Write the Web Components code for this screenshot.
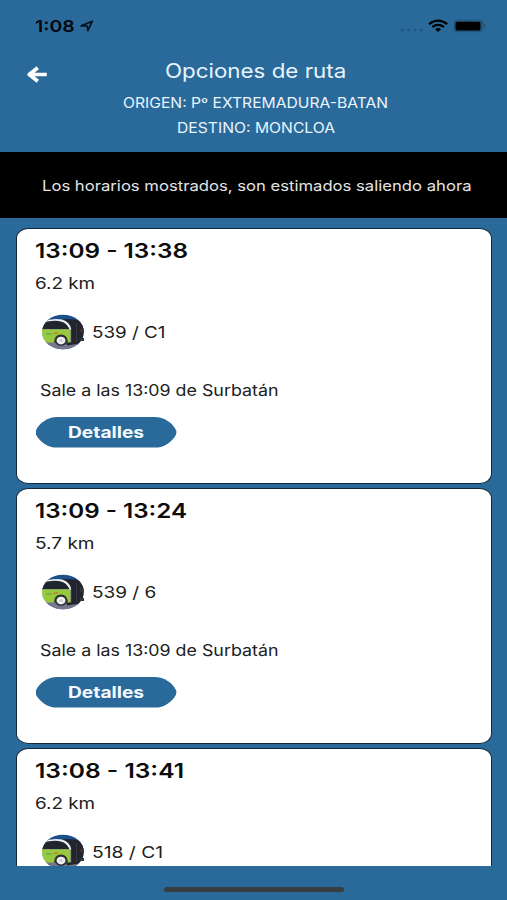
<!DOCTYPE html>
<html lang="es">
<head>
<meta charset="utf-8">
<title>Opciones de ruta</title>
<style>
  body {
    margin: 0;
    background: #2a6a9b;
    font-family: Inter, "Liberation Sans", sans-serif;
  }
</style>
</head>
<body>

<route-screen>
  <status-bar slot="status" time="1:08"></status-bar>
  <route-header slot="header"></route-header>
  <notice-banner slot="notice"><fit-text width="429.5">Los horarios mostrados, son estimados saliendo ahora</fit-text></notice-banner>
  <route-card hours="13:09 - 13:38" hours-width="153" km="6.2 km" km-width="60" lines="539 / C1" lines-width="74" leaves="Sale a las 13:09 de Surbatán"></route-card>
  <route-card hours="13:09 - 13:24" hours-width="152" km="5.7 km" km-width="59.5" lines="539 / 6" lines-width="64" leaves="Sale a las 13:09 de Surbatán"></route-card>
  <route-card hours="13:08 - 13:41" hours-width="149.5" km="6.2 km" km-width="60" lines="518 / C1" lines-width="71"></route-card>
</route-screen>

<script>
// text stretched sideways to a given width
class FitText extends HTMLElement {
  constructor() {
    super();
    this.attachShadow({ mode: 'open' }).innerHTML = `
      <style>
        :host { display: inline-block; white-space: nowrap; text-align: left; }
        span { display: inline-block; transform-origin: 0 50%; }
      </style>
      <span><slot></slot></span>
    `;
  }

  connectedCallback() {
    const span = this.shadowRoot.querySelector('span');
    const width = Number(this.getAttribute('width'));
    const natural = span.offsetWidth;
    this.style.width = `${width}px`;
    if (natural) span.style.transform = `scaleX(${width / natural})`;
  }
}

class RouteScreen extends HTMLElement {
  constructor() {
    super();
    this.attachShadow({ mode: 'open' }).innerHTML = `
      <style>
        :host {
          display: flex;
          flex-direction: column;
          box-sizing: border-box;
          width: 507px;
          height: 900px;
          overflow: hidden;
          background: #2a6a9b;
        }
        .list {
          flex: 1;
          min-height: 0;
          overflow: hidden;
          display: flex;
          flex-direction: column;
          gap: 4px;
          padding: 10.5px 15.5px 0 16px;
        }
        .home {
          flex: none;
          height: 34px;
          display: flex;
          justify-content: center;
          align-items: flex-end;
        }
        .home i {
          width: 180px;
          height: 5px;
          margin-bottom: 8px;
          border-radius: 3px;
          background: #3a3d3f;
        }
      </style>
      <slot name="status"></slot>
      <slot name="header"></slot>
      <slot name="notice"></slot>
      <div class="list"><slot></slot></div>
      <div class="home"><i></i></div>
    `;
  }
}

class StatusBar extends HTMLElement {
  constructor() {
    super();
    this.attachShadow({ mode: 'open' }).innerHTML = `
      <style>
        :host {
          display: flex;
          flex: none;
          align-items: center;
          box-sizing: border-box;
          height: 52px;
          padding: 0 20px 0 35px;
          color: #04080c;
          font-size: 16.5px;
          font-weight: 600;
        }
        svg { display: block; }
        .arrow { margin-left: 5px; }
        .right { margin-left: auto; }
      </style>
      <fit-text width="40">${this.getAttribute('time')}</fit-text>
      <svg class="arrow" width="14" height="12" viewBox="0 0 14 12">
        <path d="M1.2 5.9 12.3 1.2 7.9 10.6 7.2 6Z" fill="none" stroke="#04121e" stroke-width="1.7" stroke-linejoin="round"/>
      </svg>
      <svg class="right" width="88" height="16" viewBox="0 0 88 16">
        <g fill="#22577e">
          <circle cx="3.3" cy="12" r="1.6"/>
          <circle cx="9.6" cy="12" r="1.6"/>
          <circle cx="15.9" cy="12" r="1.6"/>
          <circle cx="22.2" cy="12" r="1.6"/>
        </g>
        <g fill="none" stroke="#000" stroke-width="2.2">
          <path d="M30 6.2Q39 -0.8 48.2 6.2"/>
          <path d="M33.3 9Q39 4.9 44.9 9"/>
        </g>
        <path d="M36.1 11.2Q39.1 8.9 42.1 11.2L39.1 13.9Z"/>
        <rect x="54.5" y="1.8" width="30" height="12.4" rx="4" fill="#22587f"/>
        <rect x="56.5" y="3.7" width="25" height="8.8" rx="1.8"/>
        <path d="M85.2 6Q88 8 85.2 10Z" fill="#1b4768"/>
      </svg>
    `;
  }
}

class RouteHeader extends HTMLElement {
  constructor() {
    super();
    this.attachShadow({ mode: 'open' }).innerHTML = `
      <style>
        :host {
          display: grid;
          flex: none;
          grid-template-columns: 74px 1fr 74px;
          height: 100px;
          color: #e9f5fd;
        }
        .back { padding: 14px 0 0 26px; }
        svg { display: block; }
        .titles {
          display: flex;
          flex-direction: column;
          align-items: center;
          padding-left: 4px;
          font-size: 14px;
        }
        .title { height: 38px; line-height: 38px; font-size: 20px; }
        .row { height: 25px; line-height: 25px; }
      </style>
      <div class="back">
        <svg width="22" height="17" viewBox="0 0 22 17">
          <path d="M20.8 8.5H4M11.8 1.8 3.2 8.5 11.8 15.2" fill="none" stroke="#fff" stroke-width="3.7" stroke-linejoin="round"/>
        </svg>
      </div>
      <div class="titles">
        <div class="title"><fit-text width="181">Opciones de ruta</fit-text></div>
        <div class="row"><fit-text width="265">ORIGEN: Pº EXTREMADURA-BATAN</fit-text></div>
        <div class="row"><fit-text width="158">DESTINO: MONCLOA</fit-text></div>
      </div>
    `;
  }
}

class NoticeBanner extends HTMLElement {
  constructor() {
    super();
    this.attachShadow({ mode: 'open' }).innerHTML = `
      <style>
        :host {
          display: flex;
          flex: none;
          align-items: center;
          justify-content: center;
          box-sizing: border-box;
          height: 65.5px;
          padding: 2px 0 0 6px;
          background: #000;
          color: #e4e4e4;
          font-size: 14.5px;
        }
      </style>
      <slot></slot>
    `;
  }
}

class BusIcon extends HTMLElement {
  constructor() {
    super();
    this.attachShadow({ mode: 'open' }).innerHTML = `
      <style>
        :host { display: block; width: 45px; height: 36px; }
        svg { display: block; }
      </style>
      <svg width="45" height="36" viewBox="0 0 45 36">
        <defs>
          <clipPath id="round"><ellipse cx="22" cy="18" rx="21" ry="17.2"/></clipPath>
        </defs>
        <g clip-path="url(#round)">
          <rect width="45" height="36" fill="#1d4f8c"/>
          <path d="M0 28H45V36H0Z" fill="#77768c"/>
          <path d="M20 5.5Q34 4 42 8V29L26 31.5Z" fill="#24242e"/>
          <path d="M0 8Q12 3.6 21 5.6 29 8 30.3 15.5V28H0Z" fill="#eef1f3"/>
          <path d="M0 9Q12 5.6 20 7.4 26 9 28.6 15.5H0Z" fill="#20262d"/>
          <path d="M0 15.5H29.6V28.6H0Z" fill="#96c93d"/>
          <path d="M29.6 15.5H31V29H29.6Z" fill="#34343d"/>
          <path d="M35.5 9V28" stroke="#3b3b47" stroke-width="0.8"/>
          <path d="M5 20H11" stroke="#5d9c55" stroke-width="1.1"/>
          <path d="M12.5 19.6 17 18.6" stroke="#c9743a" stroke-width="1.3"/>
          <path d="M13 28.6Q13.4 20.6 20 20.6 26.4 20.6 27 28.6Z" fill="#2c322a"/>
          <ellipse cx="20" cy="26.8" rx="6" ry="5.1" fill="#30303a"/>
          <ellipse cx="20" cy="26.6" rx="4.4" ry="3.9" fill="#f0f0f2"/>
          <ellipse cx="20" cy="26.6" rx="1.8" ry="1.5" fill="#cfcfd4"/>
        </g>
        <path d="M39 14.5H42.8V18H39ZM39 24H43V27H39Z" fill="#34343d"/>
      </svg>
    `;
  }
}

class DetailButton extends HTMLElement {
  constructor() {
    super();
    this.attachShadow({ mode: 'open' }).innerHTML = `
      <style>
        :host { display: block; }
        button {
          display: block;
          width: 141px;
          height: 30.6px;
          padding: 0;
          border: 0;
          background: #2a6a9b;
          clip-path: path("M22 0H119C129 0 137 6 140.5 13.2Q141.5 15.3 140.5 17.4C137 24.6 129 30.6 119 30.6H22C12 30.6 4 24.6 0.5 17.4Q-0.5 15.3 0.5 13.2C4 6 12 0 22 0Z");
          color: #f4faff;
          font: 650 16px/30px Inter, "Liberation Sans", sans-serif;
        }
      </style>
      <button type="button"><fit-text width="75.5"><slot></slot></fit-text></button>
    `;
  }

  connectedCallback() {
    // the label is slotted, so it is measured again once it is in place
    this.shadowRoot.querySelector('fit-text').connectedCallback();
  }
}

class RouteCard extends HTMLElement {
  constructor() {
    super();
    const get = name => this.getAttribute(name);
    const departure = get('leaves') ? `
      <div class="leaves"><fit-text width="238">${get('leaves')}</fit-text></div>
      <detail-button>Detalles</detail-button>
    ` : '';
    this.attachShadow({ mode: 'open' }).innerHTML = `
      <style>
        :host {
          display: block;
          flex: none;
          box-sizing: border-box;
          height: 256px;
          padding: 6px 0 0 18.5px;
          border: 1px solid #14293a;
          border-radius: 12px / 10px;
          background: #fff;
          color: #202020;
          font-size: 16px;
        }
        .hours { height: 32px; line-height: 32px; margin-left: -1px; font-size: 20px; font-weight: 600; color: #0c0c0c; }
        .km { height: 33px; line-height: 33px; margin-left: -0.5px; }
        .lines { display: flex; align-items: center; gap: 6px; height: 63px; padding-left: 5.5px; }
        .leaves { height: 52px; line-height: 52px; padding: 2px 0 0 4px; font-size: 15.5px; }
      </style>
      <div class="hours"><fit-text width="${get('hours-width')}">${get('hours')}</fit-text></div>
      <div class="km"><fit-text width="${get('km-width')}">${get('km')}</fit-text></div>
      <div class="lines">
        <bus-icon></bus-icon>
        <fit-text width="${get('lines-width')}">${get('lines')}</fit-text>
      </div>
      ${departure}
    `;
  }
}

customElements.define('fit-text', FitText);
customElements.define('bus-icon', BusIcon);
customElements.define('detail-button', DetailButton);
customElements.define('route-screen', RouteScreen);
customElements.define('status-bar', StatusBar);
customElements.define('route-header', RouteHeader);
customElements.define('notice-banner', NoticeBanner);
customElements.define('route-card', RouteCard);

// widths depend on the slots, so fit the top-level texts after everything is defined
document.querySelectorAll('fit-text').forEach(el => el.connectedCallback());
</script>
</body>
</html>
